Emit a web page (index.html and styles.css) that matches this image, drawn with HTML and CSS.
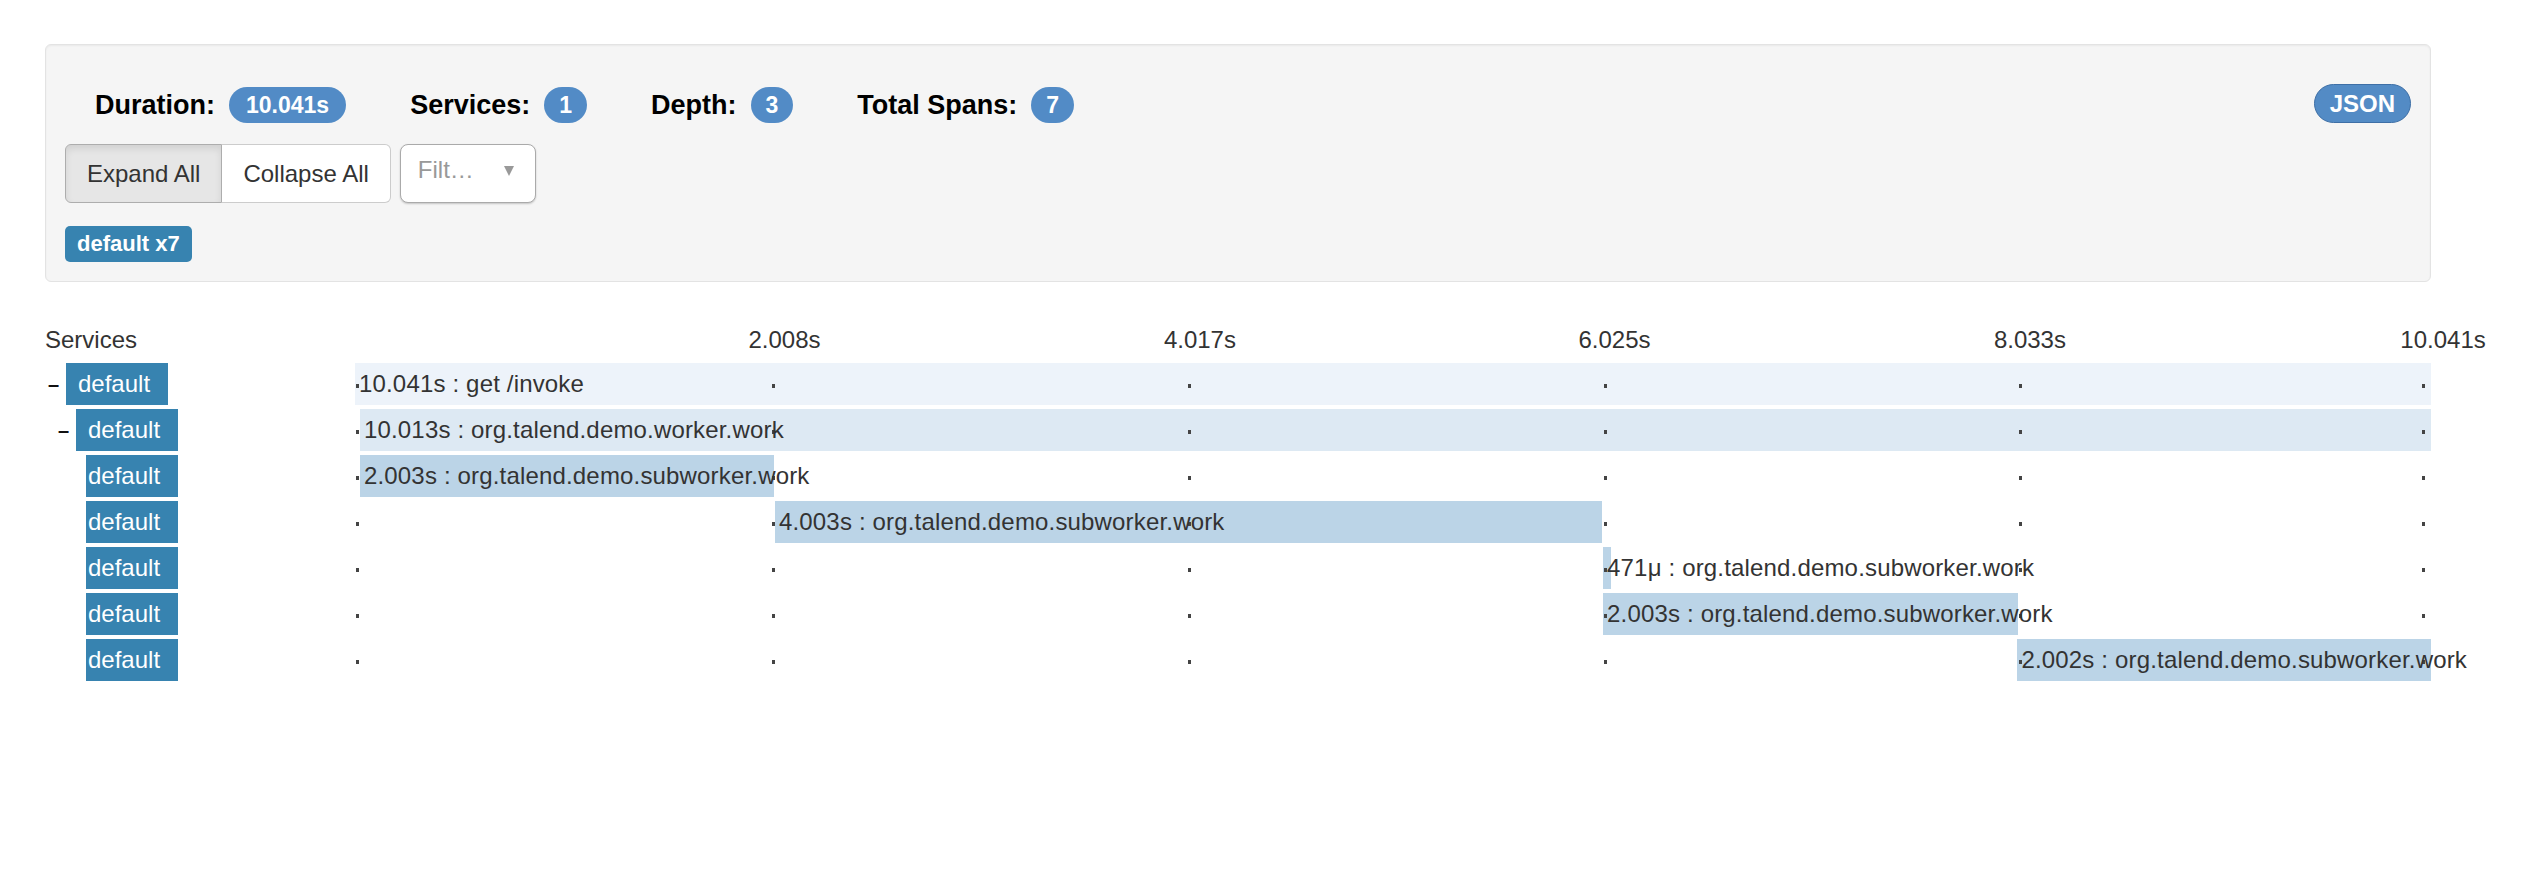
FILE: index.html
```html
<!DOCTYPE html>
<html>
<head>
<meta charset="utf-8">
<title>Trace</title>
<link rel="stylesheet" href="styles.css">
</head>
<body>
<div class="page">
  <div class="well">
    <div class="summary">
      <div class="stats">
        <div class="stat"><span class="stat-label">Duration:</span><span class="badge wide">10.041s</span></div>
        <div class="stat"><span class="stat-label">Services:</span><span class="badge">1</span></div>
        <div class="stat"><span class="stat-label">Depth:</span><span class="badge">3</span></div>
        <div class="stat"><span class="stat-label">Total Spans:</span><span class="badge">7</span></div>
      </div>
      <button class="json-btn">JSON</button>
    </div>
    <div class="controls">
      <div class="btn-group">
        <button class="btn active">Expand All</button>
        <button class="btn">Collapse All</button>
      </div>
      <div class="select">
        <span class="placeholder">Filt…</span>
        <span class="caret"></span>
      </div>
    </div>
    <div class="service-tags">
      <span class="service-tag">default x7</span>
    </div>
  </div>

  <div class="timeline">
    <div class="tl-header">
      <div class="svc-head">Services</div>
      <div class="axis">
        <span class="tick-label" style="left:20.69%">2.008s</span>
        <span class="tick-label" style="left:40.70%">4.017s</span>
        <span class="tick-label" style="left:60.67%">6.025s</span>
        <span class="tick-label" style="left:80.68%">8.033s</span>
        <span class="tick-label" style="left:100.58%">10.041s</span>
      </div>
    </div>

    <div class="tl-row">
      <div class="svc"><span class="toggle">–</span><span class="svc-name">default</span></div>
      <div class="track">
        <div class="bar depth-0" style="left:0%;width:100%"></div>
        <span class="dot" style="left:0%"></span><span class="dot" style="left:20.03%"></span><span class="dot" style="left:40.07%"></span><span class="dot" style="left:60.10%"></span><span class="dot" style="left:80.13%"></span><span class="dot" style="left:99.54%"></span>
        <span class="span-label" style="left:0%">10.041s : get /invoke</span>
      </div>
    </div>

    <div class="tl-row">
      <div class="svc d1"><span class="toggle">–</span><span class="svc-name">default</span></div>
      <div class="track">
        <div class="bar depth-1" style="left:0.24%;width:99.76%"></div>
        <span class="dot" style="left:0%"></span><span class="dot" style="left:20.03%"></span><span class="dot" style="left:40.07%"></span><span class="dot" style="left:60.10%"></span><span class="dot" style="left:80.13%"></span><span class="dot" style="left:99.54%"></span>
        <span class="span-label" style="left:0.24%">10.013s : org.talend.demo.worker.work</span>
      </div>
    </div>

    <div class="tl-row">
      <div class="svc d2"><span class="toggle"></span><span class="svc-name leaf">default</span></div>
      <div class="track">
        <div class="bar depth-2" style="left:0.24%;width:19.94%"></div>
        <span class="dot" style="left:0%"></span><span class="dot" style="left:20.03%"></span><span class="dot" style="left:40.07%"></span><span class="dot" style="left:60.10%"></span><span class="dot" style="left:80.13%"></span><span class="dot" style="left:99.54%"></span>
        <span class="span-label" style="left:0.24%">2.003s : org.talend.demo.subworker.work</span>
      </div>
    </div>

    <div class="tl-row">
      <div class="svc d2"><span class="toggle"></span><span class="svc-name leaf">default</span></div>
      <div class="track">
        <div class="bar depth-2" style="left:20.23%;width:39.84%"></div>
        <span class="dot" style="left:0%"></span><span class="dot" style="left:20.03%"></span><span class="dot" style="left:40.07%"></span><span class="dot" style="left:60.10%"></span><span class="dot" style="left:80.13%"></span><span class="dot" style="left:99.54%"></span>
        <span class="span-label" style="left:20.23%">4.003s : org.talend.demo.subworker.work</span>
      </div>
    </div>

    <div class="tl-row">
      <div class="svc d2"><span class="toggle"></span><span class="svc-name leaf">default</span></div>
      <div class="track">
        <div class="bar depth-2" style="left:60.12%;width:0.39%"></div>
        <span class="dot" style="left:0%"></span><span class="dot" style="left:20.03%"></span><span class="dot" style="left:40.07%"></span><span class="dot" style="left:60.10%"></span><span class="dot" style="left:80.13%"></span><span class="dot" style="left:99.54%"></span>
        <span class="span-label" style="left:60.12%">471μ : org.talend.demo.subworker.work</span>
      </div>
    </div>

    <div class="tl-row">
      <div class="svc d2"><span class="toggle"></span><span class="svc-name leaf">default</span></div>
      <div class="track">
        <div class="bar depth-2" style="left:60.12%;width:19.97%"></div>
        <span class="dot" style="left:0%"></span><span class="dot" style="left:20.03%"></span><span class="dot" style="left:40.07%"></span><span class="dot" style="left:60.10%"></span><span class="dot" style="left:80.13%"></span><span class="dot" style="left:99.54%"></span>
        <span class="span-label" style="left:60.12%">2.003s : org.talend.demo.subworker.work</span>
      </div>
    </div>

    <div class="tl-row">
      <div class="svc d2"><span class="toggle"></span><span class="svc-name leaf">default</span></div>
      <div class="track">
        <div class="bar depth-2" style="left:80.08%;width:19.92%"></div>
        <span class="dot" style="left:0%"></span><span class="dot" style="left:20.03%"></span><span class="dot" style="left:40.07%"></span><span class="dot" style="left:60.10%"></span><span class="dot" style="left:80.13%"></span><span class="dot" style="left:99.54%"></span>
        <span class="span-label" style="left:80.08%">2.002s : org.talend.demo.subworker.work</span>
      </div>
    </div>
  </div>
</div>
</body>
</html>
```

FILE: styles.css
```css
* { box-sizing: border-box; }

html, body {
  margin: 0;
  padding: 0;
  background: #fff;
}

body {
  font-family: "Liberation Sans", Arial, Helvetica, sans-serif;
  font-size: 24px;
  color: #333;
}

.page {
  padding: 44px 101px 40px 45px;
}

/* ---------- summary well ---------- */
.well {
  background: #f5f5f5;
  border: 1px solid #e3e3e3;
  border-radius: 6px;
  box-shadow: inset 0 1px 2px rgba(0, 0, 0, 0.05);
  padding: 19px;
}

.summary {
  display: flex;
  align-items: center;
  justify-content: space-between;
  padding-top: 22px;
}

.stats {
  display: flex;
  align-items: center;
  gap: 64px;
  padding-left: 30px;
  height: 38px;
}

.stat {
  display: flex;
  align-items: center;
  gap: 14px;
}

.stat-label {
  font-size: 27px;
  font-weight: bold;
  color: #000;
}

.badge {
  display: inline-block;
  height: 36px;
  line-height: 36px;
  padding: 0 15px;
  border-radius: 18px;
  background: #528bc6;
  color: #fff;
  font-size: 23px;
  font-weight: bold;
}

.badge.wide {
  padding: 0 17px;
}

.json-btn {
  font-family: inherit;
  height: 39px;
  padding: 0 15px;
  border: 1px solid #3e6fa6;
  border-radius: 20px;
  background: #538bc5;
  color: #fff;
  font-size: 24px;
  font-weight: bold;
  line-height: 37px;
  margin-top: -4px;
}

.controls {
  display: flex;
  align-items: stretch;
  gap: 9px;
  margin-top: 20px;
}

.btn-group {
  display: flex;
}

.btn {
  font-family: inherit;
  font-size: 24px;
  color: #333;
  background: #fff;
  border: 1px solid #ccc;
  height: 59px;
  padding: 0 21px;
  line-height: 57px;
}

.btn-group .btn:first-child {
  border-radius: 6px 0 0 6px;
}

.btn-group .btn:last-child {
  border-radius: 0 6px 6px 0;
  border-left: none;
}

.btn.active {
  background: #e6e6e6;
  border-color: #adadad;
  box-shadow: inset 0 4px 7px rgba(0, 0, 0, 0.09);
}

.select {
  width: 136px;
  height: 59px;
  display: flex;
  align-items: center;
  justify-content: space-between;
  padding: 0 21px 7px 17px;
  background: #fff;
  border: 1px solid #aaa;
  border-radius: 8px;
  box-shadow: 0 1px 2px rgba(0, 0, 0, 0.2);
}

.placeholder {
  color: #999;
  font-size: 24px;
}

.caret {
  width: 0;
  height: 0;
  border-left: 5px solid transparent;
  border-right: 5px solid transparent;
  border-top: 10px solid #999;
  margin-top: 2px;
}

.service-tags {
  margin-top: 23px;
  display: flex;
}

.service-tag {
  display: inline-block;
  height: 36px;
  line-height: 36px;
  padding: 0 12px;
  border-radius: 5px;
  background: #3783b0;
  color: #fff;
  font-size: 22px;
  font-weight: bold;
}

/* ---------- timeline ---------- */
.timeline {
  margin-top: 41px;
}

.tl-header {
  display: flex;
  height: 34px;
  line-height: 34px;
  margin-bottom: 6px;
}

.svc-head {
  width: 310px;
  flex: none;
}

.axis {
  position: relative;
  flex: 1;
}

.tick-label {
  position: absolute;
  top: 0;
  transform: translateX(-50%);
  white-space: nowrap;
}

.tl-row {
  display: flex;
  height: 42px;
  margin-bottom: 4px;
}

.svc {
  width: 310px;
  flex: none;
  display: flex;
  align-items: center;
  padding-left: 1px;
}

.svc.d1 { padding-left: 11px; }
.svc.d2 { padding-left: 21px; }

.toggle {
  width: 20px;
  flex: none;
  padding-left: 2px;
  font-size: 20px;
  font-weight: bold;
  color: #111;
  line-height: 42px;
}

.svc-name {
  height: 42px;
  line-height: 42px;
  padding: 0 18px 0 12px;
  background: #3783b0;
  color: #fff;
}

.svc-name.leaf {
  padding-left: 2px;
}

.track {
  position: relative;
  flex: 1;
}

.bar {
  position: absolute;
  top: 0;
  bottom: 0;
  min-width: 8px;
}

.bar.depth-0 { background: #edf3fa; }
.bar.depth-1 { background: #dde9f3; }
.bar.depth-2 { background: #bbd4e7; }

.dot {
  position: absolute;
  top: 21px;
  width: 3px;
  height: 4px;
  margin-left: 1px;
  background: #444;
}

.span-label {
  position: absolute;
  top: 0;
  line-height: 42px;
  padding-left: 4px;
  letter-spacing: 0.17px;
  white-space: nowrap;
  color: #333;
}
```
